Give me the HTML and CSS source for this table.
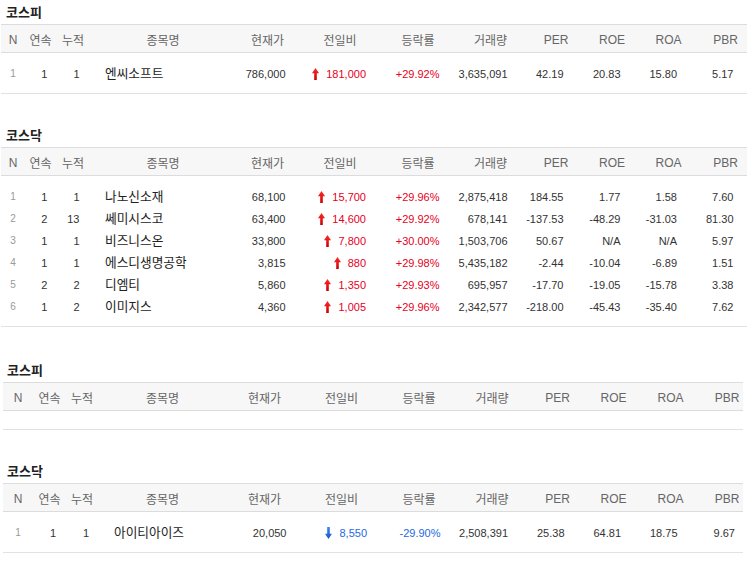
FILE: index.html
```html
<!DOCTYPE html>
<html lang="ko">
<head>
<meta charset="utf-8">
<title>상한가 종목</title>
<link rel="stylesheet" href="styles.css">
</head>
<body>
<svg width="0" height="0" class="defs" aria-hidden="true">
  <defs>
    <linearGradient id="gUp" x1="0" y1="0" x2="0" y2="1">
      <stop offset="0" stop-color="#ff2a2a"/>
      <stop offset="1" stop-color="#c80000"/>
    </linearGradient>
    <linearGradient id="gDown" x1="0" y1="0" x2="0" y2="1">
      <stop offset="0" stop-color="#3a86f0"/>
      <stop offset="1" stop-color="#1558c8"/>
    </linearGradient>
    <symbol id="up" viewBox="0 0 7 12"><path d="M3.5 0 L7 5.2 L4.8 5.2 L4.8 12 L2.2 12 L2.2 5.2 L0 5.2 Z" fill="url(#gUp)"/></symbol>
    <symbol id="down" viewBox="0 0 7 12"><path d="M3.5 12 L7 6.8 L4.8 6.8 L4.8 0 L2.2 0 L2.2 6.8 L0 6.8 Z" fill="url(#gDown)"/></symbol>
  </defs>
</svg>

<div class="group group-a">
  <section class="market">
    <h2 class="market-title">코스피</h2>
    <div class="grid">
      <div class="row head">
        <span class="c-n">N</span><span class="c-seq">연속</span><span class="c-cum">누적</span><span class="c-name">종목명</span><span class="c-price">현재가</span><span class="c-diff">전일비</span><span class="c-rate">등락률</span><span class="c-vol">거래량</span><span class="c-per">PER</span><span class="c-roe">ROE</span><span class="c-roa">ROA</span><span class="c-pbr">PBR</span>
      </div>
      <div class="body">
        <div class="row">
          <span class="c-n">1</span><span class="c-seq">1</span><span class="c-cum">1</span><span class="c-name">엔씨소프트</span><span class="c-price">786,000</span><span class="c-diff up"><svg class="arrow"><use href="#up"/></svg>181,000</span><span class="c-rate up">+29.92%</span><span class="c-vol">3,635,091</span><span class="c-per">42.19</span><span class="c-roe">20.83</span><span class="c-roa">15.80</span><span class="c-pbr">5.17</span>
        </div>
      </div>
    </div>
  </section>

  <section class="market">
    <h2 class="market-title">코스닥</h2>
    <div class="grid">
      <div class="row head">
        <span class="c-n">N</span><span class="c-seq">연속</span><span class="c-cum">누적</span><span class="c-name">종목명</span><span class="c-price">현재가</span><span class="c-diff">전일비</span><span class="c-rate">등락률</span><span class="c-vol">거래량</span><span class="c-per">PER</span><span class="c-roe">ROE</span><span class="c-roa">ROA</span><span class="c-pbr">PBR</span>
      </div>
      <div class="body">
        <div class="row">
          <span class="c-n">1</span><span class="c-seq">1</span><span class="c-cum">1</span><span class="c-name">나노신소재</span><span class="c-price">68,100</span><span class="c-diff up"><svg class="arrow"><use href="#up"/></svg>15,700</span><span class="c-rate up">+29.96%</span><span class="c-vol">2,875,418</span><span class="c-per">184.55</span><span class="c-roe">1.77</span><span class="c-roa">1.58</span><span class="c-pbr">7.60</span>
        </div>
        <div class="row">
          <span class="c-n">2</span><span class="c-seq">2</span><span class="c-cum">13</span><span class="c-name">쎄미시스코</span><span class="c-price">63,400</span><span class="c-diff up"><svg class="arrow"><use href="#up"/></svg>14,600</span><span class="c-rate up">+29.92%</span><span class="c-vol">678,141</span><span class="c-per">-137.53</span><span class="c-roe">-48.29</span><span class="c-roa">-31.03</span><span class="c-pbr">81.30</span>
        </div>
        <div class="row">
          <span class="c-n">3</span><span class="c-seq">1</span><span class="c-cum">1</span><span class="c-name">비즈니스온</span><span class="c-price">33,800</span><span class="c-diff up"><svg class="arrow"><use href="#up"/></svg>7,800</span><span class="c-rate up">+30.00%</span><span class="c-vol">1,503,706</span><span class="c-per">50.67</span><span class="c-roe">N/A</span><span class="c-roa">N/A</span><span class="c-pbr">5.97</span>
        </div>
        <div class="row">
          <span class="c-n">4</span><span class="c-seq">1</span><span class="c-cum">1</span><span class="c-name">에스디생명공학</span><span class="c-price">3,815</span><span class="c-diff up"><svg class="arrow"><use href="#up"/></svg>880</span><span class="c-rate up">+29.98%</span><span class="c-vol">5,435,182</span><span class="c-per">-2.44</span><span class="c-roe">-10.04</span><span class="c-roa">-6.89</span><span class="c-pbr">1.51</span>
        </div>
        <div class="row">
          <span class="c-n">5</span><span class="c-seq">2</span><span class="c-cum">2</span><span class="c-name">디엠티</span><span class="c-price">5,860</span><span class="c-diff up"><svg class="arrow"><use href="#up"/></svg>1,350</span><span class="c-rate up">+29.93%</span><span class="c-vol">695,957</span><span class="c-per">-17.70</span><span class="c-roe">-19.05</span><span class="c-roa">-15.78</span><span class="c-pbr">3.38</span>
        </div>
        <div class="row">
          <span class="c-n">6</span><span class="c-seq">1</span><span class="c-cum">2</span><span class="c-name">이미지스</span><span class="c-price">4,360</span><span class="c-diff up"><svg class="arrow"><use href="#up"/></svg>1,005</span><span class="c-rate up">+29.96%</span><span class="c-vol">2,342,577</span><span class="c-per">-218.00</span><span class="c-roe">-45.43</span><span class="c-roa">-35.40</span><span class="c-pbr">7.62</span>
        </div>
      </div>
    </div>
  </section>
</div>

<div class="group group-b">
  <section class="market">
    <h2 class="market-title">코스피</h2>
    <div class="grid">
      <div class="row head">
        <span class="c-n">N</span><span class="c-seq">연속</span><span class="c-cum">누적</span><span class="c-name">종목명</span><span class="c-price">현재가</span><span class="c-diff">전일비</span><span class="c-rate">등락률</span><span class="c-vol">거래량</span><span class="c-per">PER</span><span class="c-roe">ROE</span><span class="c-roa">ROA</span><span class="c-pbr">PBR</span>
      </div>
      <div class="body"></div>
    </div>
  </section>

  <section class="market">
    <h2 class="market-title">코스닥</h2>
    <div class="grid">
      <div class="row head">
        <span class="c-n">N</span><span class="c-seq">연속</span><span class="c-cum">누적</span><span class="c-name">종목명</span><span class="c-price">현재가</span><span class="c-diff">전일비</span><span class="c-rate">등락률</span><span class="c-vol">거래량</span><span class="c-per">PER</span><span class="c-roe">ROE</span><span class="c-roa">ROA</span><span class="c-pbr">PBR</span>
      </div>
      <div class="body">
        <div class="row">
          <span class="c-n">1</span><span class="c-seq">1</span><span class="c-cum">1</span><span class="c-name">아이티아이즈</span><span class="c-price">20,050</span><span class="c-diff down"><svg class="arrow"><use href="#down"/></svg>8,550</span><span class="c-rate down">-29.90%</span><span class="c-vol">2,508,391</span><span class="c-per">25.38</span><span class="c-roe">64.81</span><span class="c-roa">18.75</span><span class="c-pbr">9.67</span>
        </div>
      </div>
    </div>
  </section>
</div>
</body>
</html>
```

FILE: styles.css
```css
html, body {
  margin: 0;
  padding: 0;
  background: #fff;
}

body {
  width: 747px;
  overflow: hidden;
  font-family: "Liberation Sans", "Noto Sans CJK KR", sans-serif;
  color: #333;
}

.defs {
  position: absolute;
  width: 0;
  height: 0;
}

.market-title {
  margin: 0;
  height: 24px;
  line-height: 24px;
  padding-left: 6px;
  font-family: "Noto Sans CJK KR", sans-serif;
  font-size: 13px;
  font-weight: 700;
  color: #222;
}

.market + .market {
  margin-top: 29px;
}

.group-b {
  margin-top: 31px;
}

.group-b .market-title {
  padding-left: 7px;
}

.row {
  display: grid;
}

.row > span {
  display: flex;
  align-items: center;
  white-space: nowrap;
  min-width: 0;
}

.head {
  height: 27px;
  background: #f7f7f7;
  border-top: 1px solid #dcdcdc;
  border-bottom: 1px solid #dcdcdc;
  font-size: 12px;
  color: #666;
}

.head > span {
  justify-content: center;
  padding-top: 2px;
}

.body {
  padding: 9px 0;
  border-bottom: 1px solid #e2e2e2;
}

.body .row {
  height: 22px;
  font-size: 11px;
  color: #333;
}

.body .row > span {
  justify-content: flex-end;
  padding-top: 1px;
}

.body .row > .c-n {
  justify-content: center;
  font-size: 10px;
  color: #999;
}

.body .row > .c-name {
  justify-content: flex-start;
  font-family: "Noto Sans CJK KR", sans-serif;
  font-size: 12.7px;
  color: #222;
  padding-top: 0;
  padding-bottom: 2px;
}

.up { color: #e60023; }
.down { color: #2569e0; }

.arrow {
  width: 7px;
  height: 12px;
  margin-right: 7px;
  flex: none;
}

/* ---- group A columns (tables 1-2) ---- */
.group-a .grid {
  margin-left: 1px;
  width: 746px;
}

.group-a .row {
  grid-template-columns: 29px 21px 44px 136px 73px 72px 84px 61px 70px 42px 71px 43px;
}

.group-a .c-n { padding-right: 5px; }
.group-a .body .c-seq { padding-right: 3.6px; }
.group-a .body .c-cum { padding-right: 15.5px; }
.group-a .body .c-name { padding-left: 10px; }
.group-a .body .c-price { padding-right: 18.5px; }
.group-a .body .c-diff { padding-right: 10px; }
.group-a .body .c-rate { padding-right: 20.5px; }
.group-a .body .c-vol { padding-right: 13.5px; }
.group-a .body .c-per { padding-right: 27.5px; }
.group-a .body .c-roe { padding-right: 12.5px; }
.group-a .body .c-roa { padding-right: 27px; }
.group-a .body .c-pbr { padding-right: 13.5px; }

/* ---- group B columns (tables 3-4) ---- */
.group-b .grid {
  margin-left: 3px;
  width: 740px;
}

.group-b .row {
  grid-template-columns: 39px 15px 50px 111px 93px 61px 94px 52px 79px 33px 81px 32px;
}

.group-b .c-n { padding-right: 9px; }
.group-b .body .c-seq { padding-right: 1px; }
.group-b .body .c-cum { padding-right: 18px; }
.group-b .body .c-name { padding-left: 7px; }
.group-b .body .c-price { padding-right: 24.5px; }
.group-b .body .c-diff { padding-right: 5px; }
.group-b .body .c-rate { padding-right: 25.5px; }
.group-b .body .c-vol { padding-right: 10px; }
.group-b .body .c-per { padding-right: 32.5px; }
.group-b .body .c-roe { padding-right: 9px; }
.group-b .body .c-roa { padding-right: 33.5px; }
.group-b .body .c-pbr { padding-right: 8px; }
```
